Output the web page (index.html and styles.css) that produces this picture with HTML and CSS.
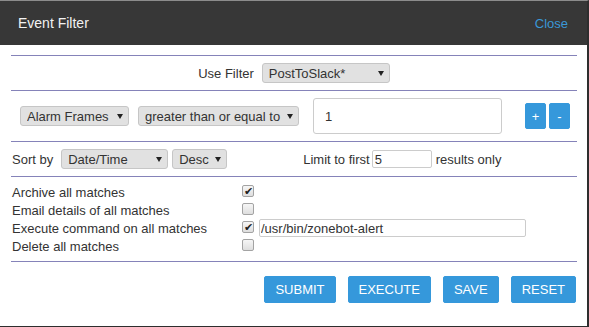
FILE: index.html
```html
<!DOCTYPE html>
<html lang="en">
<head>
    <meta charset="UTF-8">
    <title>Event Filter</title>
    <link rel="stylesheet" href="styles.css">
</head>
<body>
    <div class="modal">
        <div class="modal-header">
            <span class="modal-title">Event Filter</span>
            <a class="close-link" href="#">Close</a>
        </div>
        <div class="modal-body">
            <div class="section filter-row">
                <label class="use-label">Use Filter</label>
                <span class="select-wrap"><select class="select w-filter"><option>PostToSlack*</option></select></span>
            </div>
            <div class="section terms-row">
                <span class="select-wrap"><select class="select w-attr"><option>Alarm Frames</option></select></span>
                <span class="select-wrap"><select class="select w-op"><option>greater than or equal to</option></select></span>
                <input type="text" class="term-value" value="1">
                <div class="term-buttons">
                    <button class="btn small-btn">+</button>
                    <button class="btn small-btn">-</button>
                </div>
            </div>
            <div class="section sort-row">
                <span class="sort-label">Sort by</span>
                <span class="select-wrap"><select class="select w-sort"><option>Date/Time</option></select></span>
                <span class="select-wrap"><select class="select w-dir"><option>Desc</option></select></span>
                <div class="limit-group">
                    <span>Limit to first</span>
                    <input type="text" class="limit-input" value="5">
                    <span>results only</span>
                </div>
            </div>
            <div class="section actions-grid">
                <span>Archive all matches</span>
                <div class="action-cell"><input type="checkbox" class="check" checked></div>
                <span>Email details of all matches</span>
                <div class="action-cell"><input type="checkbox" class="check"></div>
                <span>Execute command on all matches</span>
                <div class="action-cell">
                    <input type="checkbox" class="check" checked>
                    <input type="text" class="command-input" value="/usr/bin/zonebot-alert">
                </div>
                <span>Delete all matches</span>
                <div class="action-cell"><input type="checkbox" class="check"></div>
            </div>
            <div class="button-row">
                <button class="btn">SUBMIT</button>
                <button class="btn">EXECUTE</button>
                <button class="btn">SAVE</button>
                <button class="btn">RESET</button>
            </div>
        </div>
    </div>
</body>
</html>
```

FILE: styles.css
```css
html, body {
    margin: 0;
    padding: 0;
    background-color: #fff;
    font-family: "Liberation Sans", Arial, sans-serif;
    font-size: 13px;
    color: #333;
}
.modal {
    width: 587px;
    height: 325px;
    border-top: 1px solid #8c8c8c;
    border-right: 2px solid #2e2e2e;
    border-bottom: 2px solid #2e2e2e;
    display: flex;
    flex-direction: column;
}
.modal-header {
    height: 44px;
    flex-shrink: 0;
    background-color: #373737;
    display: flex;
    align-items: center;
    justify-content: space-between;
    padding: 0 19px 0 18px;
}
.modal-title {
    color: #f2f2f2;
    font-size: 14px;
}
.close-link {
    color: #3a98d8;
    text-decoration: none;
    font-size: 13px;
}
.modal-body {
    padding: 10px 10px 0 11px;
}
.section {
    border-bottom: 1px solid #8583b9;
    display: flex;
    align-items: center;
}
.filter-row {
    border-top: 1px solid #8583b9;
    height: 34px;
    justify-content: center;
    gap: 8px;
}
.select-wrap {
    position: relative;
    display: inline-flex;
}
.select-wrap::after {
    content: "";
    position: absolute;
    right: 6px;
    top: 8px;
    border-left: 3px solid transparent;
    border-right: 3px solid transparent;
    border-top: 5px solid #222;
    pointer-events: none;
}
.select {
    appearance: none;
    -webkit-appearance: none;
    height: 20px;
    box-sizing: border-box;
    padding: 0 0 0 6px;
    border: 1px solid #c6c6c6;
    border-radius: 3px;
    background-color: #e1e1e1;
    font-family: inherit;
    font-size: 13px;
    color: #333;
}
.w-filter { width: 128px; }
.w-attr { width: 109px; }
.w-op { width: 161px; }
.w-sort { width: 107px; }
.w-dir { width: 55px; }
.terms-row {
    height: 50px;
    padding: 0 7px 0 9px;
}
.terms-row .select-wrap + .select-wrap {
    margin-left: 9px;
}
.term-value {
    margin-left: 14px;
    width: 189px;
    height: 36px;
    box-sizing: border-box;
    border: 1px solid #ccc;
    border-radius: 3px;
    padding: 0 11px;
    font-family: inherit;
    font-size: 13px;
    color: #333;
}
.term-buttons {
    margin-left: auto;
    display: flex;
    gap: 3px;
}
.btn {
    background-color: #3598db;
    border: 1px solid #3598db;
    border-radius: 2px;
    color: #fff;
    font-family: inherit;
    font-size: 13px;
    padding: 0 10px;
    height: 27px;
    cursor: pointer;
}
.small-btn {
    width: 21px;
    height: 26px;
    padding: 0;
}
.sort-row {
    height: 34px;
    padding-left: 1px;
}
.sort-label {
    margin-right: 8px;
}
.sort-row .select-wrap + .select-wrap {
    margin-left: 4px;
}
.limit-group {
    margin-left: 76px;
    display: flex;
    align-items: center;
    gap: 4px;
}
.limit-input {
    width: 60px;
    height: 18px;
    box-sizing: border-box;
    border: 1px solid #ccc;
    border-radius: 2px;
    padding: 0 2px;
    margin-left: -2px;
    font-family: inherit;
    font-size: 13px;
    color: #333;
}
.actions-grid {
    display: grid;
    grid-template-columns: 230px 1fr;
    grid-auto-rows: 18px;
    align-items: center;
    padding: 6px 0 6px 1px;
}
.action-cell {
    display: flex;
    align-items: center;
    gap: 5px;
}
.check {
    appearance: none;
    -webkit-appearance: none;
    margin: -3px 0 0 0;
    width: 12px;
    height: 12px;
    box-sizing: border-box;
    border: 1px solid #a3a3a3;
    border-radius: 2px;
    background: linear-gradient(#f6f6f6, #dedede);
    display: inline-flex;
    align-items: center;
    justify-content: center;
}
.check:checked::before {
    content: "\2714";
    font-size: 11px;
    line-height: 10px;
    color: #1e1e1e;
}
.command-input {
    width: 267px;
    height: 18px;
    box-sizing: border-box;
    border: 1px solid #ccc;
    border-radius: 2px;
    padding: 0 1px;
    font-family: inherit;
    font-size: 13px;
    color: #333;
}
.button-row {
    display: flex;
    justify-content: flex-end;
    gap: 12px;
    padding: 14px 1px 0 0;
}
```
